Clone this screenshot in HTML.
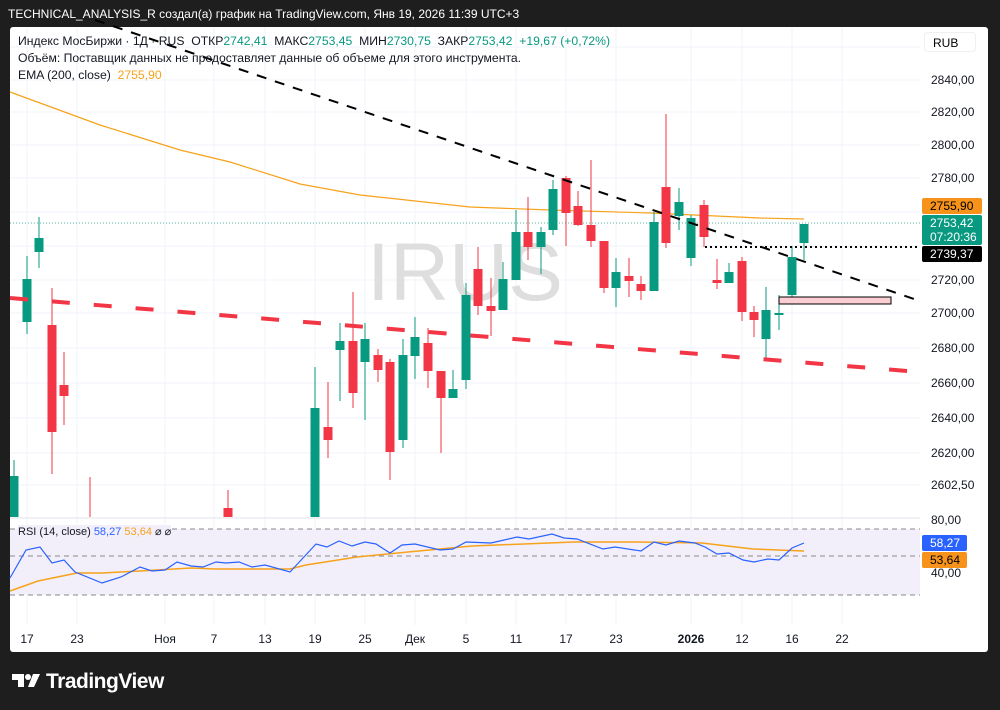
<!DOCTYPE html>
<html><head><meta charset="utf-8"><style>
body{margin:0;width:1000px;height:710px;background:#1e1e1e;font-family:"Liberation Sans",sans-serif;overflow:hidden;position:relative}
.hdr{position:absolute;left:8px;top:7px;color:#fff;font-size:12px}
.panel{position:absolute;left:10px;top:27px;width:978px;height:625px;background:#fff;border-radius:3px}
.lg{position:absolute;left:18px;font-size:12.2px;color:#131722;white-space:nowrap}
.g{color:#089981}.o{color:#f7a21b}
.ax{position:absolute;font-size:12px;color:#131722;left:931px}
.tag{position:absolute;left:922px;width:60px;font-size:12px;color:#fff;padding-left:8px;box-sizing:border-box;border-radius:2px}
.dt{position:absolute;top:632px;font-size:12px;color:#131722;transform:translateX(-50%)}
.logo{position:absolute;left:12px;top:670px;color:#fff;font-size:21px;font-weight:bold;letter-spacing:-0.5px}
</style></head><body>
<div class="hdr">TECHNICAL_ANALYSIS_R создал(а) график на TradingView.com, Янв 19, 2026 11:39 UTC+3</div>
<div class="panel"></div>
<svg style="position:absolute;left:0;top:0" width="1000" height="710">
<g stroke="#f0f3fa" stroke-width="1">
<line x1="10" y1="47" x2="920" y2="47"/><line x1="10" y1="80" x2="920" y2="80"/><line x1="10" y1="112" x2="920" y2="112"/><line x1="10" y1="145" x2="920" y2="145"/><line x1="10" y1="178" x2="920" y2="178"/><line x1="10" y1="212" x2="920" y2="212"/><line x1="10" y1="246" x2="920" y2="246"/><line x1="10" y1="280" x2="920" y2="280"/><line x1="10" y1="313" x2="920" y2="313"/><line x1="10" y1="348" x2="920" y2="348"/><line x1="10" y1="383" x2="920" y2="383"/><line x1="10" y1="418" x2="920" y2="418"/><line x1="10" y1="453" x2="920" y2="453"/><line x1="10" y1="485" x2="920" y2="485"/>
<line x1="27" y1="27" x2="27" y2="625"/><line x1="77" y1="27" x2="77" y2="625"/><line x1="165" y1="27" x2="165" y2="625"/><line x1="214" y1="27" x2="214" y2="625"/><line x1="265" y1="27" x2="265" y2="625"/><line x1="315" y1="27" x2="315" y2="625"/><line x1="365" y1="27" x2="365" y2="625"/><line x1="415" y1="27" x2="415" y2="625"/><line x1="466" y1="27" x2="466" y2="625"/><line x1="516" y1="27" x2="516" y2="625"/><line x1="566" y1="27" x2="566" y2="625"/><line x1="616" y1="27" x2="616" y2="625"/><line x1="691" y1="27" x2="691" y2="625"/><line x1="742" y1="27" x2="742" y2="625"/><line x1="792" y1="27" x2="792" y2="625"/><line x1="842" y1="27" x2="842" y2="625"/>
</g>
<line x1="10" y1="518" x2="920" y2="518" stroke="#e0e3eb"/>
<text x="465" y="300" font-size="82" fill="#dedede" text-anchor="middle" font-family="Liberation Sans">IRUS</text>
<line x1="10" y1="223" x2="920" y2="223" stroke="#089981" stroke-dasharray="1,2" opacity=".7"/>
<polyline fill="none" stroke="#f7a21b" stroke-width="1.2" points="10,92 100,125 180,150 230,162 300,184 360,195 470,207 550,210 650,213 760,218 804,219"/>
<clipPath id="cp"><rect x="10" y="27" width="910" height="490"/></clipPath>
<g clip-path="url(#cp)">
<g id="c"></g>
</g>
<line x1="10" y1="298" x2="920" y2="372" stroke="#f23645" stroke-width="4" stroke-dasharray="18,24"/>
<line x1="95" y1="20" x2="920" y2="301" stroke="#000" stroke-width="2" stroke-dasharray="10,9"/>
<line x1="705" y1="247" x2="920" y2="247" stroke="#000" stroke-width="2" stroke-dasharray="2,3"/>
<rect x="779" y="297" width="112" height="7" fill="#f9cdd1" stroke="#000" stroke-width="1"/>
<rect x="10" y="529" width="910" height="66" fill="#f2effa"/>
<g stroke="#888" stroke-dasharray="5,4"><line x1="10" y1="529" x2="920" y2="529"/><line x1="10" y1="556" x2="920" y2="556"/><line x1="10" y1="595" x2="920" y2="595"/></g>
<polyline fill="none" stroke="#f7a21b" stroke-width="1.5" points="10,591 38,581 77,573 102,573 140,571 191,568 216,569 290,569 306,565 357,557 408,552 472,546 574,542 638,542 702,543 753,549 804,551"/>
<polyline fill="none" stroke="#2962ff" stroke-width="1.2" points="10,578 26,550 40,547 52,563 64,560 75,572 102,583 121,577 140,567 152,571 165,570 177,562 191,566 203,567 216,562 226,563 239,562 252,567 265,565 290,572 316,544 327,547 339,541 352,546 365,542 376,544 390,553 402,545 415,544 440,550 453,549 466,542 491,543 517,537 529,539 552,534 564,538 577,539 603,549 615,547 641,551 654,542 666,545 679,541 695,543 705,547 717,554 729,553 743,560 754,562 768,559 779,560 792,548 804,543"/>
<g fill="#fff"><path d="M12 674h12v13h-6v-7h-6z"/><circle cx="28" cy="677" r="3"/><path d="M33 674h7l-6 13h-6z"/></g>
</svg>
<script>
var C=[[14,'g',460,476,520,520],[27,'g',256,279,322,334],[39,'g',217,238,252,268],[52,'r',288,325,432,474],[64,'r',352,385,396,425],[90,'r',477,520,520,520],[228,'r',490,508,520,520],[315,'g',367,408,520,520],[328,'r',382,427,440,458],[340,'g',323,341,350,401],[353,'r',292,341,393,408],[365,'g',323,339,362,420],[378,'r',349,355,370,382],[390,'r',359,362,452,480],[403,'g',339,355,440,448],[415,'g',317,337,356,379],[428,'r',328,343,371,388],[441,'r',371,371,398,453],[453,'g',370,389,398,398],[466,'g',283,295,380,389],[478,'r',247,269,306,315],[491,'r',278,306,311,336],[503,'g',262,279,310,310],[516,'g',210,232,280,280],[528,'r',197,232,247,260],[541,'g',227,232,247,274],[553,'g',180,189,230,235],[566,'r',176,178,213,246],[578,'r',191,206,225,226],[591,'r',160,225,241,247],[604,'r',241,241,288,293],[616,'g',258,272,288,307],[629,'r',258,276,281,297],[641,'r',276,284,291,300],[654,'g',212,222,291,291],[666,'r',114,187,243,248],[679,'g',188,202,216,230],[691,'g',215,218,258,266],[704,'r',200,205,237,247],[717,'r',259,280,283,289],[729,'g',263,272,283,283],[742,'r',257,261,312,321],[754,'r',306,312,320,337],[766,'g',287,310,339,359],[779,'g',295,313,315,330],[792,'g',246,257,295,298],[804,'g',224,224,243,260]];
var s='';C.forEach(function(c){var col=c[1]=='g'?'#089981':'#f23645';s+='<line x1="'+c[0]+'" y1="'+c[2]+'" x2="'+c[0]+'" y2="'+c[5]+'" stroke="'+col+'" stroke-width="1"/><rect x="'+(c[0]-4.5)+'" y="'+c[3]+'" width="9" height="'+Math.max(1.5,c[4]-c[3])+'" fill="'+col+'"/>';});
document.getElementById('c').innerHTML=s;
</script>
<div class="lg" style="top:34px">Индекс МосБиржи · 1Д · RUS &nbsp;ОТКР<span class="g">2742,41</span> &nbsp;МАКС<span class="g">2753,45</span> &nbsp;МИН<span class="g">2730,75</span> &nbsp;ЗАКР<span class="g">2753,42</span> &nbsp;<span class="g">+19,67 (+0,72%)</span></div>
<div class="lg" style="top:51px">Объём: Поставщик данных не предоставляет данные об объеме для этого инструмента.</div>
<div class="lg" style="top:68px">EMA (200, close) &nbsp;<span class="o">2755,90</span></div>
<div class="lg" style="top:525px;font-size:11px;background:#f2effa">RSI (14, close) <span style="color:#2962ff">58,27</span> <span class="o">53,64</span> ⌀ ⌀</div>
<div style="position:absolute;left:924px;top:32px;width:52px;height:20px;border:1px solid #f0f0f0;border-radius:4px;font-size:12px;line-height:20px;padding-left:8px;box-sizing:border-box">RUB</div>
<div class="ax" style="top:73px">2840,00</div><div class="ax" style="top:105px">2820,00</div><div class="ax" style="top:138px">2800,00</div><div class="ax" style="top:171px">2780,00</div><div class="ax" style="top:273px">2720,00</div><div class="ax" style="top:306px">2700,00</div><div class="ax" style="top:341px">2680,00</div><div class="ax" style="top:376px">2660,00</div><div class="ax" style="top:411px">2640,00</div><div class="ax" style="top:446px">2620,00</div><div class="ax" style="top:478px">2602,50</div>
<div class="ax" style="top:513px">80,00</div><div class="ax" style="top:566px">40,00</div>
<div class="tag" style="top:198px;height:16px;line-height:16px;background:#f7931a;color:#000">2755,90</div>
<div class="tag" style="top:215px;height:30px;line-height:14px;padding-top:1px;background:#089981">2753,42<br>07:20:36</div>
<div class="tag" style="top:246px;height:16px;line-height:16px;background:#000">2739,37</div>
<div class="tag" style="top:535px;height:16px;line-height:16px;background:#2962ff;width:45px">58,27</div>
<div class="tag" style="top:552px;height:16px;line-height:16px;background:#f7931a;color:#000;width:45px">53,64</div>
<div class="dt" style="left:27px">17</div><div class="dt" style="left:77px">23</div><div class="dt" style="left:165px">Ноя</div><div class="dt" style="left:214px">7</div><div class="dt" style="left:265px">13</div><div class="dt" style="left:315px">19</div><div class="dt" style="left:365px">25</div><div class="dt" style="left:415px">Дек</div><div class="dt" style="left:466px">5</div><div class="dt" style="left:516px">11</div><div class="dt" style="left:566px">17</div><div class="dt" style="left:616px">23</div><div class="dt" style="left:691px;font-weight:bold">2026</div><div class="dt" style="left:742px">12</div><div class="dt" style="left:792px">16</div><div class="dt" style="left:842px">22</div>
<div class="logo" style="left:46px">TradingView</div>
</body></html>
